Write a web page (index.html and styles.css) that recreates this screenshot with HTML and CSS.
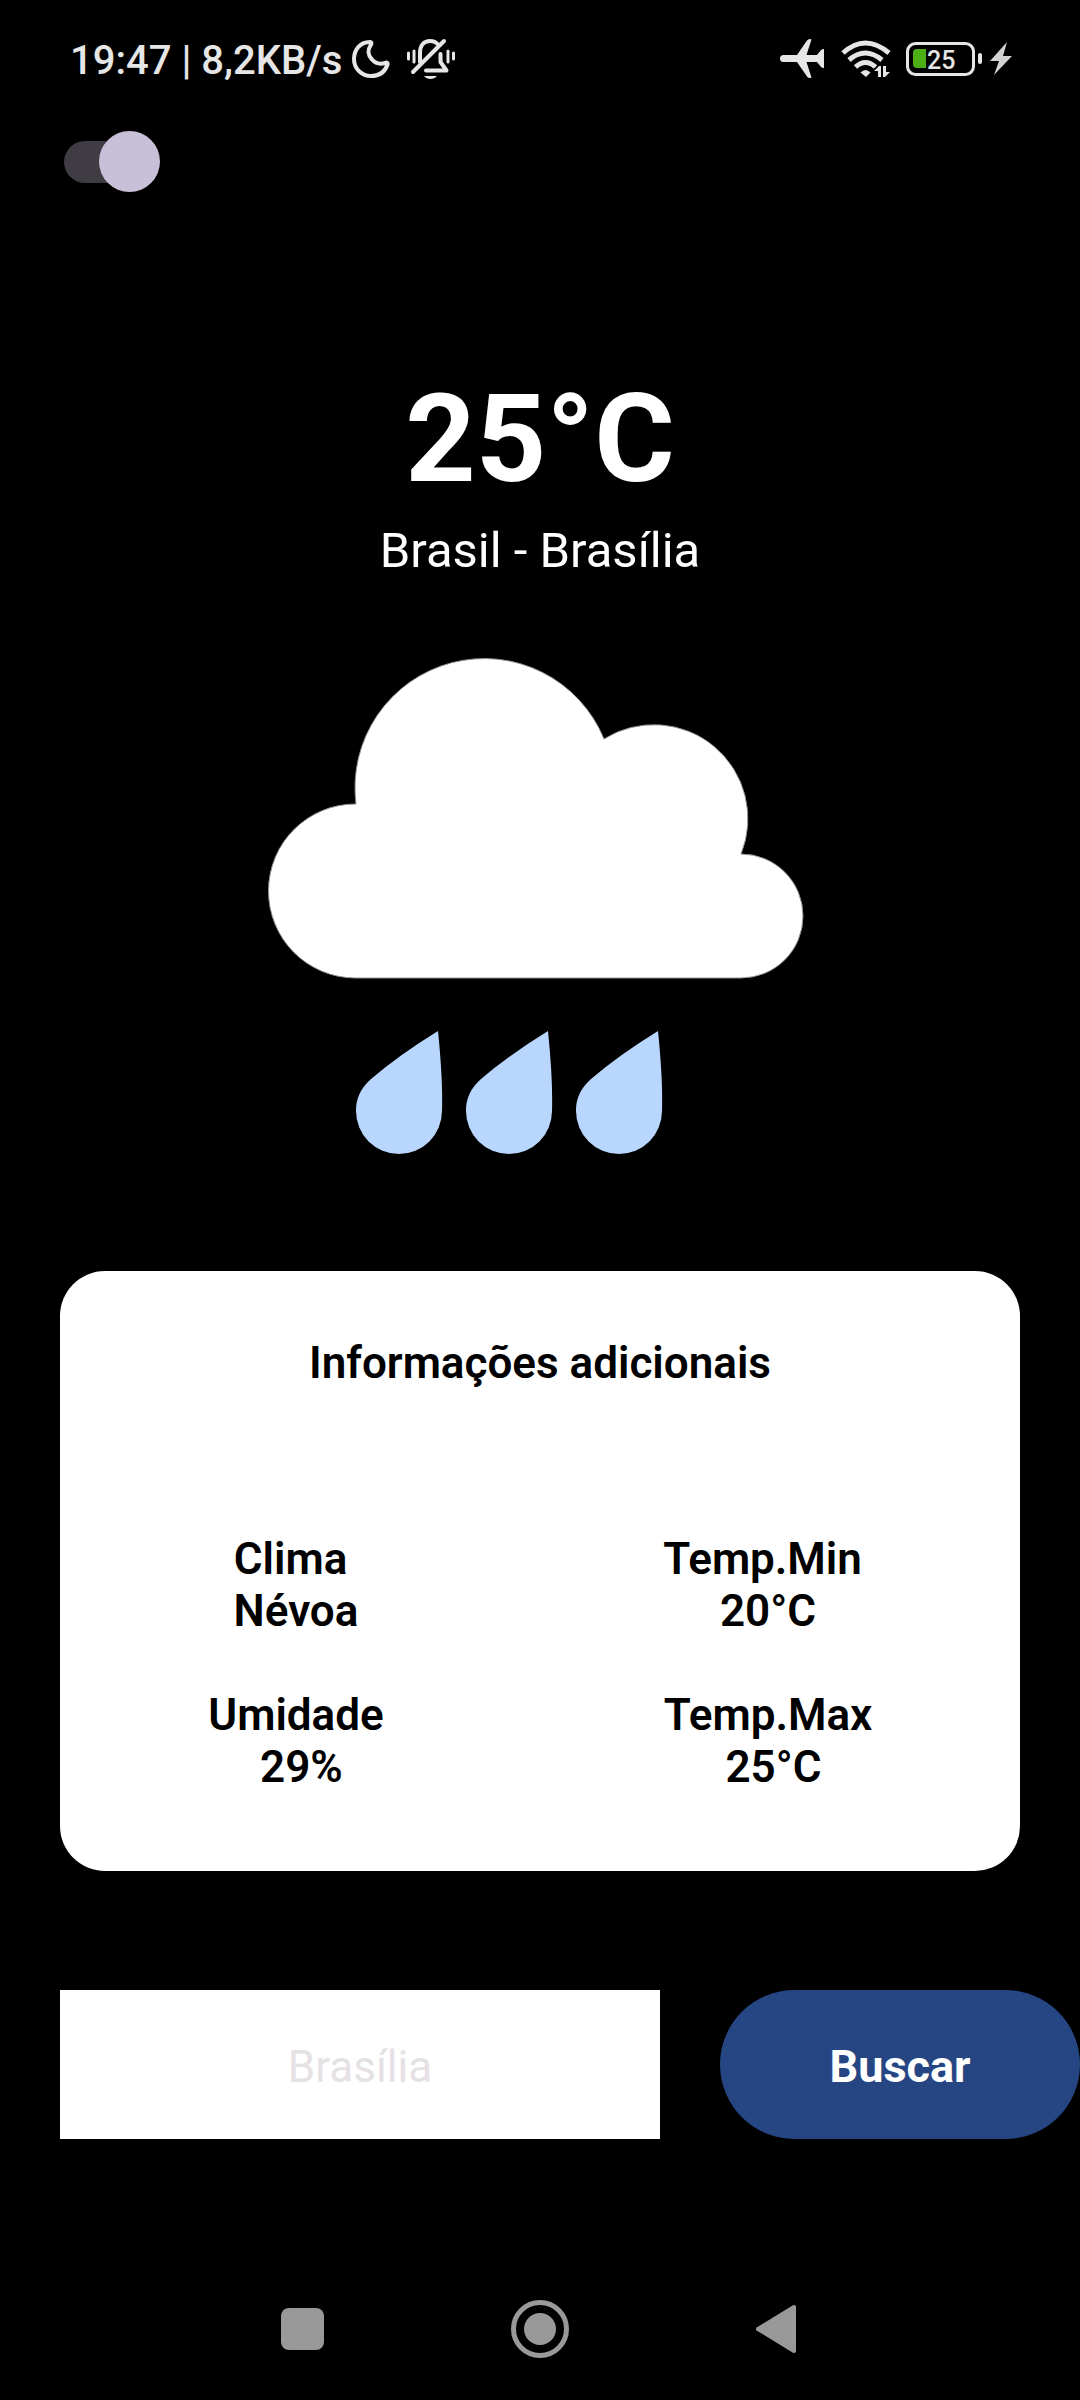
FILE: index.html
```html
<!DOCTYPE html>
<html lang="pt-BR">
<head>
<meta charset="utf-8">
<meta name="viewport" content="width=device-width, initial-scale=1">
<title>Clima</title>
<link rel="stylesheet" href="styles.css">
</head>
<body>
<div class="screen">
  <header class="status">
    <div class="status-side">
      <span class="status-text">19:47 | 8,2KB/s</span>
      <svg class="moon" width="38" height="40" viewBox="0 0 38 40" aria-hidden="true">
        <path d="M18 3C7 3 2 12 2 20c0 10 8 17 17 17 8 0 14-4 16.500-11.500C36 24 35 23 33 24c-5 1.500-10 0-13-3.500-4-4-4.500-9.500-1.500-14C20 4.500 19.500 3 18 3Z" fill="none" stroke="#e6e6e6" stroke-width="4" stroke-linejoin="round"/>
      </svg>
      <svg class="bell" width="50" height="42" viewBox="0 0 50 42" fill="none" stroke="#e6e6e6" stroke-linecap="round" aria-hidden="true">
        <path d="M14 24V15C14 7 18 3 24 3c3 0 6 1 8 3.500" stroke-width="4"/>
        <path d="M34.500 16v8l6 8.500H20" stroke-width="4" stroke-linejoin="round"/>
        <path d="M7 34 38 3" stroke-width="4"/>
        <path d="M2.500 15v6M47.500 15v6" stroke-width="3"/>
        <path d="M8 13v11M42 13v11" stroke-width="3"/>
        <path d="M18 38h13c-1.500 2-4 3-6.500 3s-5-1-6.500-3Z" fill="#e6e6e6" stroke="none"/>
      </svg>
    </div>
    <div class="status-side status-right">
      <svg width="46" height="40" viewBox="0 0 46 40" fill="#e6e6e6" aria-hidden="true">
        <path d="M3.500 16H17L27 1.500Q28 0 30 0q2 0 1 2l-4.500 14H37l4-5q1-1 3-1v19q-2 0-3-1l-4-5H26.500L31 37q1 2-1 2t-3-1.500L17 23H3.500a3.500 3.500 0 0 1 0-7Z"/>
      </svg>
      <svg width="52" height="40" viewBox="0 0 52 40" aria-hidden="true">
        <g fill="none" stroke="#e6e6e6" stroke-width="5">
          <path d="M3 14q22-20 46 0"/>
          <path d="M9 21q16-14 33 0"/>
          <path d="M15.500 28q10-9 20 0"/>
        </g>
        <path d="M20.500 33.500q5-5 10 0L26 38Z" fill="#e6e6e6"/>
        <path d="M34 32l5-5h2v11h-3v-6ZM43 27h3v6h4l-5 5h-2Z" fill="#e6e6e6"/>
      </svg>
      <div class="power">
        <span class="battery">
          <svg width="78" height="34" viewBox="0 0 78 34" aria-hidden="true">
            <rect x="1.500" y="1.500" width="66" height="31" rx="8" fill="none" stroke="#e6e6e6" stroke-width="3"/>
            <rect x="72" y="11" width="4" height="11" rx="2" fill="#e6e6e6"/>
            <path d="M20 7v19h-9q-4 0-4-4V11q0-4 4-4Z" fill="#4caf14"/>
          </svg>
          <span class="battery-level">25</span>
        </span>
        <svg width="22" height="34" viewBox="0 0 22 34" aria-hidden="true">
          <path d="M17 0 0 19h9L4 33 22 14h-9Z" fill="#d2d2d2"/>
        </svg>
      </div>
    </div>
  </header>

  <div class="theme">
    <input class="switch" type="checkbox" role="switch" aria-label="Tema escuro" checked>
  </div>

  <main class="content">
    <section class="now">
      <h1 class="temperature">25°C</h1>
      <p class="place">Brasil - Brasília</p>
      <svg class="weather" viewBox="0 0 580 540" role="img" aria-label="Chuva">
        <path d="M105 338A87 87 0 0 1 106 164 129.300 129.300 0 0 1 354 99 94 94 0 0 1 491 214 62 62 0 0 1 491 338Z" fill="#fff" stroke="#8b939c" stroke-width="1"/>
        <g fill="#b9d7fe">
          <path id="drop" d="M188 391Q149 415 121 439C110 449 106 459 106 471A43 43 0 0 0 192 471Q193 440 188 391Z"/>
          <use href="#drop" x="110"/>
          <use href="#drop" x="220"/>
        </g>
      </svg>
    </section>

    <section class="card">
      <h2 class="card-title">Informações adicionais</h2>
      <div class="facts">
        <div class="fact">Clima 
Névoa</div>
        <div class="fact">Temp.Min 
20°C</div>
        <div class="fact">Umidade
 29%</div>
        <div class="fact">Temp.Max
 25°C</div>
      </div>
    </section>

    <form class="search">
      <input class="city" type="text" placeholder="Brasília" aria-label="Cidade">
      <button class="submit" type="button">Buscar</button>
    </form>
  </main>

  <nav class="keys" aria-label="Sistema">
    <button class="key" type="button" aria-label="Recentes">
      <svg width="60" height="60" viewBox="0 0 60 60"><rect x="9" y="9" width="43" height="42" rx="8" fill="#999"/></svg>
    </button>
    <button class="key" type="button" aria-label="Início">
      <svg width="60" height="60" viewBox="0 0 60 60"><circle cx="30" cy="30" r="26.500" fill="none" stroke="#999" stroke-width="5"/><circle cx="30" cy="30" r="16" fill="#999"/></svg>
    </button>
    <button class="key" type="button" aria-label="Voltar">
      <svg width="60" height="60" viewBox="0 0 60 60"><path d="M46 8v44L10 30Z" fill="#999" stroke="#999" stroke-width="4" stroke-linejoin="round"/></svg>
    </button>
  </nav>
</div>
</body>
</html>
```
FILE: styles.css
```css
* {
  box-sizing: border-box;
}

body {
  margin: 0;
  background: #000;
  color: #fff;
  font-family: Roboto, "Noto Sans", sans-serif;
}

.screen {
  display: flex;
  flex-direction: column;
  min-height: 100vh;
  overflow-x: hidden;
}

svg {
  display: block;
}

/* Status bar */
.status {
  display: flex;
  justify-content: space-between;
  height: 118px;
  padding: 0 68px 0 70px;
  color: #e6e6e6;
}

.status-side {
  display: flex;
  align-items: center;
}

.status-right {
  gap: 14px;
}

.power {
  display: flex;
  gap: 6px;
}

.status-text {
  padding-top: 4px;
  font-size: 40px;
  font-weight: 500;
  line-height: 48px;
}

.moon {
  margin-left: 10px;
}

.bell {
  margin-left: 16px;
}

.battery {
  position: relative;
}

.battery-level {
  position: absolute;
  left: 21px;
  top: 6px;
  font-size: 25px;
  font-weight: 500;
  line-height: 25px;
}

/* Theme switch */
.theme {
  display: flex;
  padding: 13px 64px 0;
}

.switch {
  appearance: none;
  display: flex;
  align-items: center;
  position: relative;
  width: 96px;
  height: 61px;
  margin: 0;
}

.switch::before {
  content: "";
  width: 90px;
  height: 42px;
  border-radius: 21px;
  background: #3f3c43;
}

.switch::after {
  content: "";
  position: absolute;
  right: 0;
  top: 0;
  width: 61px;
  height: 61px;
  border-radius: 50%;
  background: #c8bfd8;
}

/* Weather now */
.content {
  display: flex;
  flex-direction: column;
  padding: 175px 0 0 60px;
}

.now {
  display: flex;
  flex-direction: column;
  align-items: center;
  margin-right: 60px;
  text-align: center;
}

.temperature {
  margin: 0;
  font-size: 123px;
  font-weight: 700;
  line-height: 144px;
}

.place {
  margin: 12px 0 0;
  font-size: 49px;
  line-height: 56px;
}

.weather {
  width: 580px;
  max-width: 100%;
  margin-top: 61px;
}

/* Extra information */
.card {
  min-height: 600px;
  margin: 91px 60px 0 0;
  padding: 66px 16px 66px 0;
  border-radius: 45px;
  background: #fff;
  color: #000;
}

.card-title {
  margin: 0 -16px 0 0;
  font-size: 44px;
  font-weight: 600;
  line-height: 52px;
  text-align: center;
}

.facts {
  display: grid;
  grid-template-columns: 1fr 1fr;
  row-gap: 52px;
  margin-top: 144px;
}

.fact {
  font-size: 44px;
  font-weight: 600;
  line-height: 52px;
  text-align: center;
  white-space: pre;
}

/* City search */
.search {
  display: flex;
  gap: 60px;
  margin-top: 119px;
}

.city,
.submit {
  height: 149px;
  padding: 4px 0 0;
  border: 0;
  font-family: inherit;
  font-size: 44px;
  text-align: center;
}

.city {
  flex: 5;
  min-width: 0;
  background: #fff;
  color: #000;
}

.city::placeholder {
  color: #e5e1e5;
  opacity: 1;
}

.submit {
  flex: 3;
  border-radius: 75px;
  background: #264583;
  color: #fff;
  font-size: 45px;
  font-weight: 700;
}

/* System keys */
.keys {
  display: flex;
  justify-content: center;
  gap: 178px;
  margin-top: auto;
  padding: 41px 0;
}

.key {
  padding: 0;
  border: 0;
  background: none;
}
```
